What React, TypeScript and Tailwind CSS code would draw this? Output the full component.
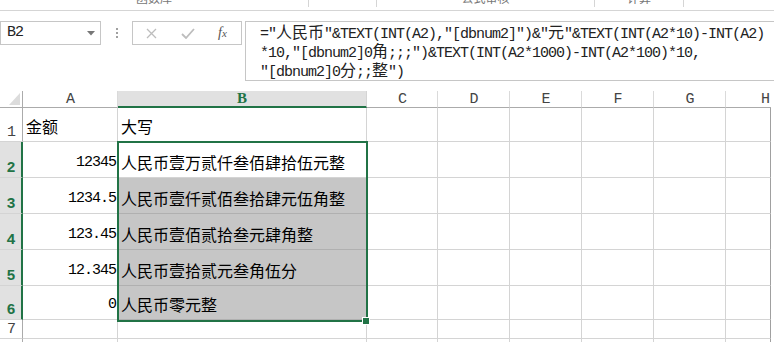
import React from 'react';

const MONO = "font-['Liberation_Mono','DejaVu_Sans_Mono',monospace] text-[15px] tracking-[-1px]";
const CJK = "font-['Noto_Sans_CJK_SC','Noto_Sans',sans-serif] text-[16px]";

const GRID_COLS = 'grid grid-cols-[23px_95px_249px_71px_72px_72px_72px_72px_45px]';

interface RowData {
  n: number;
  height: string;
  a?: string;
  b?: string;
  selected?: boolean;
  active?: boolean;
}

const ROWS: RowData[] = [
  { n: 1, height: 'h-[34px]', a: '金额', b: '大写' },
  { n: 2, height: 'h-[36px]', a: '12345', b: '人民币壹万贰仟叁佰肆拾伍元整', selected: true, active: true },
  { n: 3, height: 'h-[36px]', a: '1234.5', b: '人民币壹仟贰佰叁拾肆元伍角整', selected: true },
  { n: 4, height: 'h-[36px]', a: '123.45', b: '人民币壹佰贰拾叁元肆角整', selected: true },
  { n: 5, height: 'h-[36px]', a: '12.345', b: '人民币壹拾贰元叁角伍分', selected: true },
  { n: 6, height: 'h-[34px]', a: '0', b: '人民币零元整', selected: true },
  { n: 7, height: 'h-[19px]' },
  { n: 8, height: 'h-[19px]' },
];

const FORMULA = [
  '="人民币"&TEXT(INT(A2),"[dbnum2]")&"元"&TEXT(INT(A2*10)-INT(A2)',
  '*10,"[dbnum2]0角;;;")&TEXT(INT(A2*1000)-INT(A2*100)*10,',
  '"[dbnum2]0分;;整")',
];

// half-width runs in mono, CJK runs in the CJK face (like SimSun's 1:2 widths)
function Mixed({ text }: { text: string }) {
  const parts = text.split(/([\u3400-\u9fff]+)/).filter((p) => p.length > 0);
  return (
    <>
      {parts.map((p, i) =>
        /[\u3400-\u9fff]/.test(p) ? (
          <span key={i} className={`${CJK} leading-[19px]`}>
            {p}
          </span>
        ) : (
          <span key={i} className={`${MONO} leading-[19px] whitespace-pre`}>
            {p}
          </span>
        ),
      )}
    </>
  );
}

function RibbonStrip() {
  const groups = [
    { w: 'w-[309px]', label: '函数库' },
    { w: 'w-[68px]', label: '' },
    { w: 'w-[218px]', label: '公式审核' },
    { w: 'w-[89px]', label: '计算' },
  ];
  return (
    <div className="h-[11px] border-b border-[#d5d5d5] flex overflow-hidden">
      {groups.map((g) => (
        <div key={g.w} className={`${g.w} h-[7px] border-r border-[#d5d5d5] overflow-visible`}>
          <div className="mt-[-9px] text-center text-[12px] leading-[14px] text-[#777] font-['Noto_Sans_CJK_SC',sans-serif]">
            {g.label}
          </div>
        </div>
      ))}
    </div>
  );
}

function FormulaBar() {
  return (
    <div className="mt-[10px] flex items-start">
      <div className="w-[101px] h-[24px] border border-[#c6c6c6] flex items-center justify-between pl-[6px] pr-[5px]">
        <span className={`${MONO} text-[#222]`}>B2</span>
        <svg width="8" height="5" viewBox="0 0 8 5">
          <polygon points="0,0 8,0 4,4.5" fill="#777" />
        </svg>
      </div>
      <div className="w-[31px] flex flex-col items-center gap-[2px] pt-[7px]">
        <span className="w-[2px] h-[2px] bg-[#a0a0a0]" />
        <span className="w-[2px] h-[2px] bg-[#a0a0a0]" />
        <span className="w-[2px] h-[2px] bg-[#a0a0a0]" />
      </div>
      <div className="w-[110px] h-[24px] border border-[#c6c6c6] flex items-center pl-[13px]">
        <svg width="11" height="11" viewBox="0 0 11 11">
          <path d="M1 1 L10 10 M10 1 L1 10" stroke="#bdbdbd" strokeWidth="1.3" fill="none" />
        </svg>
        <svg className="ml-[24px]" width="14" height="11" viewBox="0 0 14 11">
          <path d="M1 6 L5 10 L13 1" stroke="#bdbdbd" strokeWidth="1.8" fill="none" />
        </svg>
        <span className="ml-[23px] font-['Liberation_Serif',serif] italic text-[14px] leading-none text-[#555]">
          f<span className="text-[11px]">x</span>
        </span>
      </div>
      <div className="ml-[3px] flex-1 h-[60px] border border-r-0 border-[#c6c6c6] pl-[14px] overflow-hidden whitespace-nowrap text-[#222]">
        {FORMULA.map((line) => (
          <div key={line} className="h-[19px] flex items-baseline">
            <Mixed text={line} />
          </div>
        ))}
      </div>
    </div>
  );
}

function ColumnHeaders() {
  const letters = ['A', 'B', 'C', 'D', 'E', 'F', 'G', 'H'];
  return (
    <div className={`${GRID_COLS} h-[17px]`}>
      <div className="border-r border-b border-[#ababab] relative">
        <svg className="absolute left-[9px] top-[2px]" width="12" height="13" viewBox="0 0 12 13">
          <polygon points="11,0 11,12 0,12" fill="#dcdcdc" />
        </svg>
      </div>
      {letters.map((l) =>
        l === 'B' ? (
          <div
            key={l}
            className="bg-[#e1e1e1] border-r border-[#d4d4d4] border-b-2 border-b-[#217346] flex items-center justify-center font-['Liberation_Serif',serif] font-bold text-[15px] leading-none text-[#217346]"
          >
            {l}
          </div>
        ) : (
          <div
            key={l}
            className={`border-b border-[#ababab] ${l === 'H' ? 'justify-end pr-[2px]' : 'border-r border-r-[#dadada] justify-center'} flex items-center ${MONO} leading-none text-[#444]`}
          >
            {l}
          </div>
        ),
      )}
    </div>
  );
}

function SheetRow({ row }: { row: RowData }) {
  const isNum = row.a !== undefined && /^[0-9.]+$/.test(row.a);
  const bFill = row.selected && !row.active;
  return (
    <div className={`${GRID_COLS} ${row.height}`}>
      <div
        className={`flex items-end justify-center border-b border-[#d4d4d4] ${
          row.selected
            ? 'bg-[#e1e1e1] border-r-2 border-r-[#217346] text-[#217346] font-bold'
            : 'border-r border-r-[#ababab] text-[#444]'
        } ${MONO} leading-[15px] pb-[1px]`}
      >
        {row.n}
      </div>
      <div
        className={`border-r border-b border-[#d4d4d4] flex items-end pb-[5px] overflow-visible whitespace-nowrap ${
          isNum ? 'justify-end pr-[1px]' : 'pl-[3px]'
        }`}
      >
        {row.a && <Mixed text={row.a} />}
      </div>
      <div
        className={`border-r border-b flex items-end pb-[5px] pl-[3px] whitespace-nowrap text-black ${
          bFill ? 'bg-[#c6c6c6] border-[#b0b0b0]' : 'border-[#d4d4d4]'
        }`}
      >
        {row.b && <Mixed text={row.b} />}
      </div>
      {[0, 1, 2, 3, 4].map((i) => (
        <div key={i} className="border-r border-b border-[#d4d4d4]" />
      ))}
      <div className="border-r border-r-[#a0a0a0] border-b border-[#d4d4d4]" />
    </div>
  );
}

export default function App() {
  return (
    <div className="w-[774px] h-[342px] overflow-hidden bg-white text-black">
      <RibbonStrip />
      <FormulaBar />
      <div className="mt-[10px] relative">
        <ColumnHeaders />
        {ROWS.map((r) => (
          <SheetRow key={r.n} row={r} />
        ))}
        {/* selection outline for B2:B6 + fill handle */}
        <div className="absolute left-[117px] top-[50px] w-[251px] h-[181px] border-2 border-[#217346] pointer-events-none" />
        <div className="absolute left-[362px] top-[226px] w-[8px] h-[8px] bg-[#217346] border border-white" />
      </div>
    </div>
  );
}
